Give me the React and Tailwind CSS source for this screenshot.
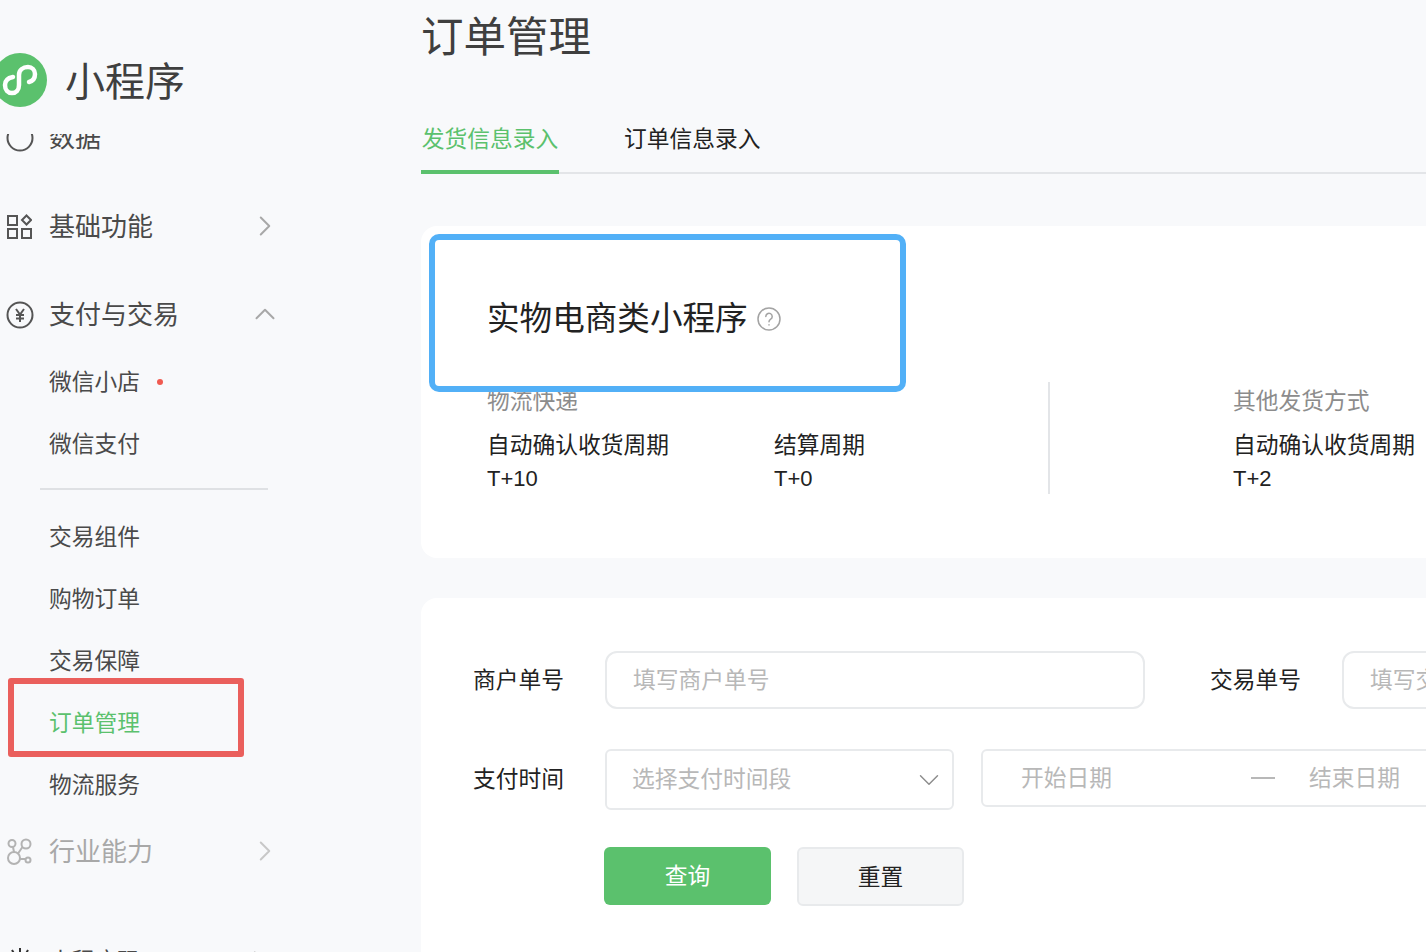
// App.jsx
import { ChevronRight, ChevronUp, ChevronDown } from "lucide-react";

const cjk = "font-['Liberation_Sans','Noto_Sans_CJK_SC',sans-serif]";

const Logo = () => (
  <svg width="54" height="54" viewBox="0 0 54 54" className="shrink-0">
    <circle cx="27" cy="27" r="27" fill="#5bc16d" />
    <path
      d="M20 24C15 25 12 28 12 32C12 37 15 40 19 40C23 40 26 37 26 32V22C26 17 30 14 35 14C39 14 42 17 42 21C42 25 40 28 36 29"
      fill="none"
      stroke="#fff"
      strokeWidth="4.5"
      strokeLinecap="round"
    />
  </svg>
);

const GridIcon = () => (
  <svg width="26" height="26" viewBox="0 0 26 26" fill="none" stroke="#555" strokeWidth="2">
    <rect x="2" y="2" width="9" height="9" />
    <rect x="2" y="15" width="9" height="9" />
    <rect x="16" y="15" width="9" height="9" />
    <path d="M20.5 1.5l4.5 4.5-4.500 4.500-4.500-4.500z" />
  </svg>
);

const YuanIcon = () => (
  <svg width="28" height="28" viewBox="0 0 28 28" fill="none" stroke="#555" strokeWidth="2">
    <circle cx="14" cy="14" r="12.5" />
    <path d="M10 8l4 5.500 4-5.500M14 13.500V21M10 14h8M10 17.500h8" />
  </svg>
);

const IndustryIcon = () => (
  <svg width="26" height="28" viewBox="0 0 26 28" fill="none" stroke="#b3b3b3" strokeWidth="2">
    <circle cx="6" cy="5.500" r="3.500" />
    <circle cx="20" cy="6" r="4.500" />
    <circle cx="8" cy="20" r="6" />
    <circle cx="22" cy="22" r="2.500" />
    <path d="M7 9l1 5M16.500 9L12 15.500M14 21h5.500" />
  </svg>
);

const MainMenu = ({ icon, label, chevron, muted }) => (
  <div className="flex h-[62px] items-center">
    <div className="flex w-[50px] shrink-0 justify-start pl-[6px]">{icon}</div>
    <span className={`-ml-[1px] w-[205px] text-[26px] ${muted ? "text-[#a8a8a8]" : "text-[#4a4a4a]"}`}>{label}</span>
    {chevron}
  </div>
);

const SubMenu = ({ label, active, dot }) => (
  <div className={`flex h-[62px] items-center pl-[49px] text-[22.75px] ${active ? "text-[#5bc16d]" : "text-[#4a4a4a]"}`}>
    {label}
    {dot && <span className="ml-[17px] h-[6px] w-[6px] rounded-full bg-[#f05a50]" />}
  </div>
);

const Field = ({ className, children }) => (
  <div className={`flex items-center border-2 border-[#e8eaec] bg-white text-[22.75px] text-[#b8b8b8] ${className}`}>
    {children}
  </div>
);

export default function App() {
  return (
    <div className={`relative flex h-[952px] w-[1426px] overflow-hidden bg-[#f8f9fb] ${cjk}`}>
      <aside className="flex w-[421px] shrink-0 flex-col overflow-hidden">
        {/* Logo */}
        <div className="flex h-[134px] shrink-0 items-start pt-[53px]">
          <div className="-ml-[7px]">
            <Logo />
          </div>
          <span className="ml-[18px] text-[40px] leading-[58px] text-[#3f3f3f]">小程序</span>
        </div>

        {/* Menu, 数据 is scrolled behind the logo */}
        <div className="flex-1 overflow-hidden">
          <div className="-mt-[27px] flex h-[62px] items-center">
            <div className="w-[50px] pl-[6px]">
              <svg width="28" height="28" viewBox="0 0 28 28" fill="none" stroke="#555" strokeWidth="2">
                <circle cx="14" cy="14" r="12.5" />
              </svg>
            </div>
            <span className="-ml-[1px] text-[26px] text-[#4a4a4a]">数据</span>
          </div>
          <div className="h-[27px]" />
          <MainMenu icon={<GridIcon />} label="基础功能" chevron={<ChevronRight size={34} strokeWidth={1.4} className="-mt-[2px] -ml-[6px] text-[#a8a8a8]" />} />
          <div className="h-[26px]" />
          <MainMenu icon={<YuanIcon />} label="支付与交易" chevron={<ChevronUp size={34} strokeWidth={1.4} className="-mt-[2px] -ml-[6px] text-[#a8a8a8]" />} />
          <div className="h-[5px]" />
          <SubMenu label="微信小店" dot />
          <SubMenu label="微信支付" />
          <div className="mt-[13px] mb-[16px] ml-[40px] h-[2px] w-[228px] bg-[#dfe1e4]" />
          <SubMenu label="交易组件" />
          <SubMenu label="购物订单" />
          <SubMenu label="交易保障" />
          <SubMenu label="订单管理" active />
          <SubMenu label="物流服务" />
          <div className="h-[5px]" />
          <MainMenu icon={<IndustryIcon />} label="行业能力" muted chevron={<ChevronRight size={34} strokeWidth={1.4} className="-mt-[2px] -ml-[6px] text-[#c8c8c8]" />} />
          <div className="h-[47px]" />
          <div className="flex h-[62px] items-center">
            <div className="w-[50px] pl-[6px]">
              <svg width="28" height="28" viewBox="0 0 28 28" fill="none" stroke="#333" strokeWidth="2">
                <path d="M14 1v8M6 3l4 7M22 3l-4 7M1 9l6 4M27 9l-6 4" />
              </svg>
            </div>
            <span className="-ml-[1px] w-[193px] text-[22.75px] text-[#4a4a4a]">小程序码</span>
            <ChevronRight size={34} strokeWidth={1.4} className="text-[#a8a8a8]" />
          </div>
        </div>
      </aside>

      <main className="min-w-0 flex-1">
        <h1 className="pt-[10px] text-[42.5px] leading-[56px] text-[#3f3f3f]">订单管理</h1>

        {/* Tabs */}
        <div className="mt-[58px] flex h-[50px] border-b-2 border-[#e3e5e8] text-[22.75px]">
          <div className="h-[50px] w-[138px] border-b-4 border-[#5bc16d] text-center leading-[30px] whitespace-nowrap text-[#5bc16d]">发货信息录入</div>
          <div className="ml-[65px] leading-[30px] text-[#222]">订单信息录入</div>
        </div>

        {/* Shipping info card */}
        <section className="mt-[52px] h-[332px] rounded-l-[16px] bg-white pl-[66px]">
          <div className="flex items-center pt-[70px]">
            <span className="text-[32.6px] leading-[46px] text-[#222]">实物电商类小程序</span>
            <svg width="24" height="24" viewBox="0 0 24 24" fill="none" className="ml-[9px]" stroke="#a3a3a3" strokeWidth="1.5">
              <circle cx="12" cy="12" r="11" />
              <path d="M8.800 9.500a3.200 3.200 0 1 1 4.900 2.700c-1.100.7-1.700 1.300-1.700 2.600" strokeLinecap="round" />
              <path d="M12 17.200v1.300" />
            </svg>
          </div>
          <div className="mt-[40px] flex">
            <div className="w-[561px] shrink-0 pt-[6px]">
              <div className="text-[22.75px] leading-[26px] text-[#8c8c8c]">物流快递</div>
              <div className="mt-[15px] flex text-[22.75px] leading-[33px] text-[#222]">
                <div className="w-[287px]">
                  <div>自动确认收货周期</div>
                  <div className="text-[22px]">T+10</div>
                </div>
                <div>
                  <div>结算周期</div>
                  <div className="text-[22px]">T+0</div>
                </div>
              </div>
            </div>
            <div className="h-[112px] w-[2px] shrink-0 bg-[#e3e5e8]" />
            <div className="ml-[183px] shrink-0 pt-[6px] whitespace-nowrap">
              <div className="text-[22.75px] leading-[26px] text-[#8c8c8c]">其他发货方式</div>
              <div className="mt-[15px] text-[22.75px] leading-[33px] text-[#222]">
                <div>自动确认收货周期</div>
                <div className="text-[22px]">T+2</div>
              </div>
            </div>
          </div>
        </section>

        {/* Search form */}
        <section className="mt-[40px] h-[400px] rounded-l-[16px] bg-white pt-[53px] pl-[52px]">
          <div className="flex h-[58px] items-center whitespace-nowrap">
            <span className="w-[132px] shrink-0 text-[22.75px] text-[#222]">商户单号</span>
            <Field className="h-[58px] w-[540px] shrink-0 rounded-[12px] pl-[26px]">填写商户单号</Field>
            <span className="ml-[65px] w-[132px] shrink-0 text-[22.75px] text-[#222]">交易单号</span>
            <Field className="h-[58px] w-[300px] shrink-0 rounded-[12px] pl-[26px]">填写交易单号</Field>
          </div>
          <div className="mt-[40px] flex items-start whitespace-nowrap">
            <span className="flex h-[60px] w-[132px] shrink-0 items-center text-[22.75px] text-[#222]">支付时间</span>
            <Field className="h-[61px] w-[349px] shrink-0 justify-between rounded-[6px] pr-[6px] pl-[25px]">
              选择支付时间段
              <ChevronDown size={34} strokeWidth={1} className="text-[#8c8c8c]" />
            </Field>
            <Field className="ml-[27px] h-[58px] w-[520px] shrink-0 rounded-[6px] pl-[38px]">
              开始日期
              <span className="ml-[139px] h-[2px] w-[24px] bg-[#b8b8b8]" />
              <span className="ml-[34px]">结束日期</span>
            </Field>
          </div>
          <div className="mt-[37px] ml-[131px] flex gap-[26px]">
            <button className="h-[58px] w-[167px] rounded-[6px] bg-[#5bc16d] text-[22.75px] text-white">查询</button>
            <button className="h-[59px] w-[167px] rounded-[6px] border-2 border-[#e8eaec] bg-[#f5f6f7] pt-[2px] text-[22.75px] text-[#222]">重置</button>
          </div>
        </section>
      </main>

      {/* Annotation boxes laid over the screenshot */}
      <div className="absolute top-[234px] left-[429px] h-[158px] w-[477px] rounded-[10px] border-[6px] border-[#52b0f7]" />
      <div className="absolute top-[678px] left-[8px] h-[79px] w-[236px] rounded-[3px] border-[6px] border-[#ea5f5c]" />
    </div>
  );
}
